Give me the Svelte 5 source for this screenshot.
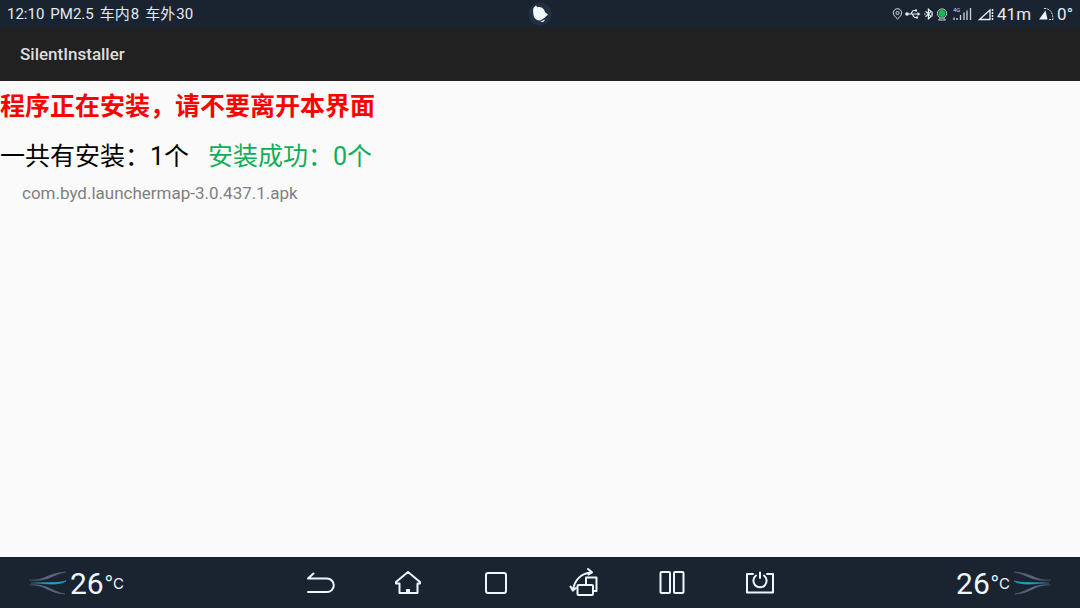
<script lang="ts">
  let {
    files = ['com.byd.launchermap-3.0.437.1.apk'],
    installed = 0,
    temperature = 26,
  }: { files?: string[]; installed?: number; temperature?: number } = $props();
</script>

{#snippet airflow(side: string)}
  <svg class="airflow" class:mirrored={side === 'right'} width="40" height="26" viewBox="0 0 40 26" aria-hidden="true">
    <defs>
      <linearGradient id="grey-{side}">
        <stop offset="0" stop-color="#52627a" stop-opacity="0.3" />
        <stop offset="0.5" stop-color="#5c6c83" />
        <stop offset="1" stop-color="#5c6c83" stop-opacity="0.4" />
      </linearGradient>
      <linearGradient id="blue-{side}">
        <stop offset="0" stop-color="#2b7fa8" stop-opacity="0.3" />
        <stop offset="0.55" stop-color="#20a5d6" />
        <stop offset="1" stop-color="#2ba9d8" stop-opacity="0.6" />
      </linearGradient>
    </defs>
    <path d="M1 10C18 11 20 3 38 2C25 4 20 12 1 10Z" fill="url(#grey-{side})" stroke="url(#grey-{side})" />
    <path d="M1 15C18 14 20 23 37 24C24 22 18 13 1 15Z" fill="url(#grey-{side})" stroke="url(#grey-{side})" />
    <path d="M3 13C16 12 27 14 38 11C30 16 17 13 3 13Z" fill="url(#blue-{side})" stroke="url(#blue-{side})" />
  </svg>
{/snippet}

{#snippet climate(side: string)}
  <div class="climate" class:right={side === 'right'}>
    {@render airflow(side)}
    <span class="temp">{temperature}<span class="unit"><span class="degree">°</span>C</span></span>
  </div>
{/snippet}

<div class="screen">
  <header class="status">
    <div class="info">
      <span>12:10</span>
      <span>PM2.5</span>
      <span>车内<b>8</b></span>
      <span>车外<b>30</b></span>
    </div>
    <svg class="assistant" width="24" height="24" viewBox="0 0 24 24" aria-hidden="true">
      <circle cx="12" cy="12" r="11.5" fill="#213043" />
      <path d="M6 5.2L8 3.6L9.4 5.2C13.8 4.6 16.2 7 17 10.2L20 12.6C18 14.2 15.5 17.4 12 18.4C8 18.6 5.6 15.8 5.4 12C5.2 9.6 4.6 7.2 6 5.2Z" fill="#f2f8ff" />
      <path d="M12.5 19.6L16.8 17.4C16.6 19.8 14.3 20.8 12.5 19.6Z" fill="#dce8f5" />
    </svg>
    <div class="indicators">
      <svg width="11" height="12" viewBox="0 0 11 12" fill="none" stroke="#d5dee8" aria-hidden="true">
        <path d="M5.5 11C3.5 9.2 1.3 7.2 1.3 4.9a4.2 4.2 0 0 1 8.4 0C9.7 7.2 7.5 9.2 5.5 11Z" />
        <circle cx="5.5" cy="5" r="1.6" />
      </svg>
      <svg width="16" height="12" viewBox="0 0 16 12" fill="none" stroke="#e5edf5" aria-hidden="true">
        <circle cx="2" cy="6" r="1.8" fill="#e5edf5" stroke="none" />
        <path d="M2 6H14M5 6C7 6 6.500 2.500 9 2.500H11M6.500 6C8.500 6 8 9.500 10 9.500H12" stroke-width="1.2" />
        <path d="M12.500 4L15.500 6L12.500 8Z" fill="#e5edf5" stroke="none" />
        <path d="M10 1.500h2v2h-2zM11 8.500h2v2h-2z" fill="#e5edf5" stroke="none" />
      </svg>
      <svg width="11" height="12" viewBox="0 0 11 12" fill="none" stroke="#e5edf5" stroke-width="1.2" aria-hidden="true">
        <path d="M2.5 3.2L8 8.4L5.4 10.8V1.2L8 3.6L2.5 8.8" />
        <path d="M1 6h1.5M8.5 6H10M9 3.5v5" />
      </svg>
      <svg width="12" height="13" viewBox="0 0 12 13" fill="none" stroke="#c9d9dd" aria-hidden="true">
        <circle cx="6" cy="5.5" r="4.6" />
        <circle cx="6" cy="5.5" r="3.4" fill="#13bd4e" stroke="none" />
        <path d="M4.5 10L2.5 12H9.5L7.5 10" />
      </svg>
      <svg class="signal" width="19" height="14" viewBox="0 0 19 14" aria-hidden="true">
        <text x="0" y="5">4G</text>
        <path d="M1 10.5v2.5M4 11v2M7.5 8v5M11 5.500v7.500M14 3.500v9.500M17.500 1v12" stroke="#cbd5df" stroke-width="1.3" />
      </svg>
      <svg width="17" height="13" viewBox="0 0 17 13" fill="none" stroke="#e5edf5" aria-hidden="true">
        <path d="M1.5 11.5L12 2V11.500Z" stroke-width="1.3" />
        <path d="M14.500 1v11" stroke-dasharray="2 1" stroke-width="1.5" />
      </svg>
      <span class="reading">41m</span>
      <svg class="slope" width="17" height="14" viewBox="0 0 17 14" aria-hidden="true">
        <path d="M1 12.5L7.5 3.5L9.500 12.500Z" fill="#edf5fc" />
        <path d="M6 1.500C12 1 15 6 15 12.500H10" fill="none" stroke="#d5dee8" stroke-dasharray="2 1" />
      </svg>
      <span class="reading">0°</span>
    </div>
  </header>

  <div class="appbar">
    <h1>SilentInstaller</h1>
  </div>

  <main>
    <p class="warning">程序正在安装，请不要离开本界面</p>
    <p class="summary">
      <span>一共有安装：{files.length}个</span>
      <span class="success">安装成功：{installed}个</span>
    </p>
    <ul>
      {#each files as file (file)}
        <li>{file}</li>
      {/each}
    </ul>
  </main>

  <footer>
    {@render climate('left')}
    <nav>
      <button aria-label="Back">
        <svg viewBox="0 0 32 32"><path d="M9.5 6.5L4 11.5H23a6.8 6.8 0 0 1 0 13.6H4" /></svg>
      </button>
      <button aria-label="Home">
        <svg viewBox="0 0 32 32">
          <path d="M16 5L28 15V16.5H25.5V26H7.5V16.5H4V15Z" />
          <path d="M14 22h4v4h-4z" fill="#edf5ff" stroke="none" />
        </svg>
      </button>
      <button aria-label="Recent apps">
        <svg viewBox="0 0 32 32"><rect x="6" y="6" width="20" height="20" rx="2" /></svg>
      </button>
      <button aria-label="Rotate screen">
        <svg viewBox="0 0 32 32">
          <path d="M5 23.5C6 14 12.5 6 23.5 5.5M20 2L24 5.3L20.5 7.5M2.500 19.500L4.800 23.500L8 21" />
          <path d="M18 17.500V10.500H28.500V24H25.500" />
          <rect x="9.500" y="18" width="15.500" height="10" rx="1" />
        </svg>
      </button>
      <button aria-label="Split screen">
        <svg viewBox="0 0 32 32">
          <rect x="4.500" y="5" width="9.500" height="21" rx="1" />
          <rect x="18" y="5" width="9.500" height="21" rx="1" />
        </svg>
      </button>
      <button aria-label="Screen off">
        <svg viewBox="0 0 32 32">
          <path d="M9 7H3V25.500H29V7H23" />
          <path d="M16 5.500V11M12 8.500a6.600 6.600 0 1 0 8 0" />
        </svg>
      </button>
    </nav>
    {@render climate('right')}
  </footer>
</div>

<style>
  :global(body) {
    background: #fafafa;
  }
  .screen {
    min-height: 100vh;
    display: flex;
    flex-direction: column;
    font-family: Roboto, 'Noto Sans CJK SC', sans-serif;
  }
  .status {
    display: grid;
    grid-template-columns: 1fr auto 1fr;
    align-items: center;
    height: 28px;
    padding: 0 7px;
    background: #1a2430;
    color: #e2eaf3;
  }
  .info {
    display: flex;
    gap: 6px;
    font-size: 15px;
    line-height: 28px;
    white-space: nowrap;
  }
  .info b {
    font-weight: 400;
    margin-left: 1px;
  }
  .indicators {
    display: flex;
    align-items: center;
    justify-content: flex-end;
    gap: 2px;
  }
  .signal {
    margin: 0 4px 0 3px;
  }
  .signal text {
    font-size: 6px;
    fill: #cbd5df;
  }
  .reading {
    font-size: 17px;
    line-height: 28px;
  }
  .slope {
    margin-left: 5px;
  }
  .appbar {
    display: flex;
    align-items: center;
    box-sizing: border-box;
    height: 53px;
    padding: 0 20px 2px;
    background: #212121;
  }
  h1 {
    margin: 0;
    font-size: 17px;
    font-weight: 500;
    color: #dedede;
  }
  main {
    flex: 1;
    padding-top: 1px;
    background: #fafafa;
  }
  p {
    margin: 0;
    font-size: 25px;
    line-height: 50px;
  }
  .warning {
    color: #f00;
    font-weight: 700;
  }
  .summary {
    display: flex;
    gap: 19px;
    color: #000;
  }
  .success {
    color: #0fae58;
  }
  ul {
    list-style: none;
    margin: 0;
    padding: 0 22px;
  }
  li {
    font-size: 17px;
    line-height: 22px;
    color: #808080;
  }
  footer {
    display: grid;
    grid-template-columns: 1fr auto 1fr;
    align-items: center;
    height: 51px;
    padding: 0 28px;
    background: #1a2430;
    color: #edf5ff;
  }
  nav {
    display: flex;
  }
  button {
    display: flex;
    align-items: center;
    justify-content: center;
    width: 88px;
    height: 51px;
    padding: 0;
    border: 0;
    background: none;
  }
  button svg {
    width: 32px;
    height: 32px;
    fill: none;
    stroke: #edf5ff;
    stroke-width: 2;
    stroke-linejoin: round;
    stroke-linecap: round;
  }
  .climate {
    display: flex;
    align-items: center;
    gap: 2px;
  }
  .climate.right {
    flex-direction: row-reverse;
  }
  .airflow.mirrored {
    transform: scaleX(-1);
  }
  .temp {
    display: flex;
    align-items: center;
    padding-top: 2px;
    font-size: 30px;
    line-height: 48px;
  }
  .unit {
    margin-left: 1px;
    font-family: Inter, sans-serif;
    font-size: 15px;
  }
  .degree {
    font-size: 18px;
  }
</style>
